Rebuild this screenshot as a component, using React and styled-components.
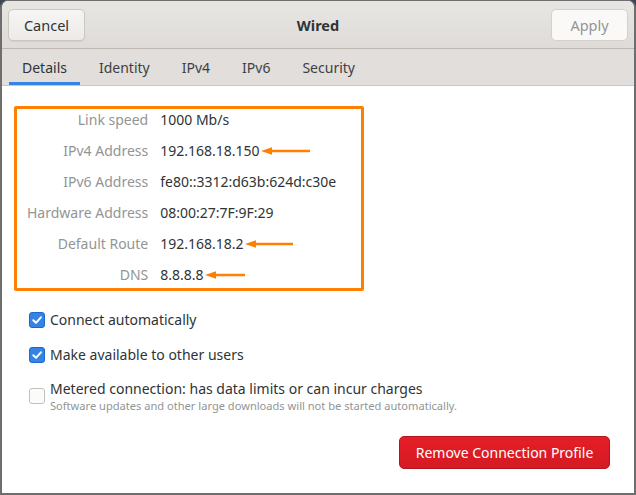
import React from 'react';
import styled, { createGlobalStyle } from 'styled-components';

const Global = createGlobalStyle`
  html, body {
    margin: 0;
    padding: 0;
    background: #3b4656;
  }
  body {
    font-family: "Noto Sans", "DejaVu Sans", sans-serif;
    color: #2e3436;
  }
`;

const Window = styled.div`
  width: 636px;
  height: 495px;
  box-sizing: border-box;
  display: flex;
  flex-direction: column;
  background: #ffffff;
  border: 1px solid #6e6e6e;
  border-width: 1px 2px 2px 2px;
  border-radius: 8px 8px 0 0;
  overflow: hidden;
`;

const HeaderBar = styled.div`
  height: 47px;
  flex: none;
  display: grid;
  grid-template-columns: 1fr auto 1fr;
  align-items: center;
  padding: 0 6px;
  background: linear-gradient(#e8e6e3, #dedbd8);
  border-bottom: 1px solid #bfb8b1;
`;

const Title = styled.div`
  font-weight: 700;
  font-size: 14.5px;
  color: #2e3436;
`;

const HeaderButton = styled.button`
  justify-self: ${(p) => (p.end ? 'end' : 'start')};
  width: 77px;
  height: 32px;
  border-radius: 5px;
  font-family: inherit;
  font-size: 14.5px;
  border: 1px solid ${(p) => (p.disabled ? '#d5d0cc' : '#cdc7c2')};
  background: ${(p) => (p.disabled ? '#faf9f8' : 'linear-gradient(#f6f5f4, #edebe9)')};
  color: ${(p) => (p.disabled ? '#929595' : '#2e3436')};
  box-shadow: ${(p) => (p.disabled ? 'none' : '0 1px 1px rgba(0,0,0,0.07)')};
`;

const TabBar = styled.div`
  height: 36px;
  flex: none;
  display: flex;
  align-items: stretch;
  padding-left: 7px;
  background: #e1dedb;
  border-bottom: 1px solid #cdc7c2;
`;

const Tab = styled.div`
  display: flex;
  align-items: center;
  padding: 0 13px;
  margin-right: 6px;
  font-size: 14px;
  color: ${(p) => (p.active ? '#2e3436' : '#3d4144')};
  box-shadow: ${(p) => (p.active ? 'inset 0 -3px 0 #3584e4' : 'none')};
`;

const Content = styled.div`
  flex: 1;
  display: flex;
  flex-direction: column;
  padding: 20px 24px 0 12px;
`;

const Highlight = styled.div`
  width: 350px;
  height: 185px;
  box-sizing: border-box;
  border: 3px solid #ff7f00;
  border-radius: 2px;
  padding: 0 0 0 10px;
  display: grid;
  grid-template-columns: auto 1fr;
  grid-auto-rows: 22px;
  row-gap: 9px;
  column-gap: 12px;
  align-content: start;
`;

const Label = styled.div`
  text-align: right;
  font-size: 14px;
  line-height: 22px;
  color: #929595;
  white-space: nowrap;
`;

const Value = styled.div`
  display: flex;
  align-items: center;
  font-size: 14px;
  line-height: 22px;
  color: #2e3436;
  white-space: nowrap;
`;

const Options = styled.div`
  display: flex;
  flex-direction: column;
  gap: 13px;
  margin-top: 18px;
  padding-left: 15px;
`;

const Option = styled.label`
  display: flex;
  align-items: center;
  gap: 5px;
  min-height: 22px;
`;

const Box = styled.span`
  width: 16px;
  height: 16px;
  flex: none;
  box-sizing: border-box;
  border-radius: 3px;
  display: flex;
  align-items: center;
  justify-content: center;
  background: ${(p) => (p.checked ? '#3584e4' : '#fbfbfa')};
  border: 1px solid ${(p) => (p.checked ? '#1b6acb' : '#c4bfba')};
`;

const OptionText = styled.div`
  display: flex;
  flex-direction: column;
`;

const OptionTitle = styled.span`
  font-size: 14px;
  line-height: 20px;
  color: #2e3436;
`;

const OptionHint = styled.span`
  font-size: 11.1px;
  line-height: 14px;
  color: #929595;
`;

const Footer = styled.div`
  display: flex;
  justify-content: flex-end;
  margin-top: 23px;
`;

const DangerButton = styled.button`
  width: 211px;
  height: 33px;
  border-radius: 5px;
  border: 1px solid #b2161d;
  background: linear-gradient(#e51e27, #d41a23);
  color: #ffffff;
  font-family: inherit;
  font-size: 14px;
`;

function Arrow({ width }) {
  return (
    <svg width={width} height="10" viewBox={`0 0 ${width} 10`} style={{ marginLeft: 1 }}>
      <line x1="6" y1="5" x2={width} y2="5" stroke="#ff7f00" strokeWidth="2.5" />
      <path d="M0 5 L11 1.2 L11 8.8 Z" fill="#ff7f00" />
    </svg>
  );
}

function Check() {
  return (
    <svg width="12" height="12" viewBox="0 0 12 12">
      <path d="M2.3 6.2 L5 8.8 L9.9 3.3" fill="none" stroke="#fff" strokeWidth="2" strokeLinecap="round" strokeLinejoin="round" />
    </svg>
  );
}

const details = [
  { label: 'Link speed', value: '1000 Mb/s' },
  { label: 'IPv4 Address', value: '192.168.18.150', arrow: 49 },
  { label: 'IPv6 Address', value: 'fe80::3312:d63b:624d:c30e' },
  { label: 'Hardware Address', value: '08:00:27:7F:9F:29' },
  { label: 'Default Route', value: '192.168.18.2', arrow: 48 },
  { label: 'DNS', value: '8.8.8.8', arrow: 40 },
];

const tabs = ['Details', 'Identity', 'IPv4', 'IPv6', 'Security'];

export default function App() {
  return (
    <>
      <Global />
      <Window>
        <HeaderBar>
          <HeaderButton>Cancel</HeaderButton>
          <Title>Wired</Title>
          <HeaderButton end disabled>Apply</HeaderButton>
        </HeaderBar>
        <TabBar>
          {tabs.map((t, i) => (
            <Tab key={t} active={i === 0}>{t}</Tab>
          ))}
        </TabBar>
        <Content>
          <Highlight>
            {details.map((d) => (
              <React.Fragment key={d.label}>
                <Label>{d.label}</Label>
                <Value>
                  {d.value}
                  {d.arrow && <Arrow width={d.arrow} />}
                </Value>
              </React.Fragment>
            ))}
          </Highlight>
          <Options>
            <Option>
              <Box checked><Check /></Box>
              <OptionTitle>Connect automatically</OptionTitle>
            </Option>
            <Option>
              <Box checked><Check /></Box>
              <OptionTitle>Make available to other users</OptionTitle>
            </Option>
            <Option>
              <Box />
              <OptionText>
                <OptionTitle>Metered connection: has data limits or can incur charges</OptionTitle>
                <OptionHint>Software updates and other large downloads will not be started automatically.</OptionHint>
              </OptionText>
            </Option>
          </Options>
          <Footer>
            <DangerButton>Remove Connection Profile</DangerButton>
          </Footer>
        </Content>
      </Window>
    </>
  );
}
